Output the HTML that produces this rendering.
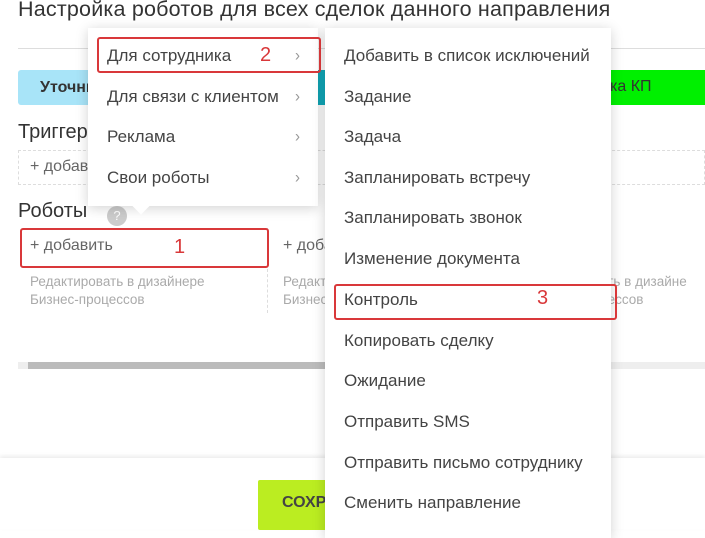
<!DOCTYPE html>
<html><head><meta charset="utf-8"><style>
*{margin:0;padding:0;box-sizing:border-box}
body{width:705px;height:529px;overflow:hidden;background:#fff;font-family:"Liberation Sans",sans-serif;position:relative;color:#333}
.a{position:absolute}
.title{left:18px;top:-3px;font-size:21.5px;color:#333;letter-spacing:0.2px}
.m{background:#fff;box-shadow:0 2px 12px rgba(0,0,0,.18)}
.it{position:absolute;font-size:17px;color:#444}
.ch{position:absolute;font-size:15px;color:#999;transform:scaleY(1.1)}
.gr{color:#aaa;font-size:13.5px}
.red{border:2px solid #d9383a;border-radius:3px}
.num{color:#d9383a;font-size:20px}
</style></head><body>
<div class="a title">Настройка роботов для всех сделок данного направления</div>
<div class="a" style="left:18px;top:48px;width:687px;height:1px;background:#ddd"></div>
<div class="a" style="left:18px;top:70px;width:300px;height:35px;background:#a8e4f8;border-radius:3px;font-weight:bold;font-size:16px;padding:9px 22px">Уточнить</div>
<div class="a" style="left:318px;top:70px;width:10px;height:35px;background:#1ab;"></div>
<div class="a" style="left:560px;top:70px;width:145px;height:35px;background:#00f000;font-size:16px;padding:8px 0 0 50px;color:#333">ка КП</div>
<div class="a" style="left:18px;top:121px;font-size:20px">Триггеры</div>
<div class="a" style="left:18px;top:150px;width:687px;height:35px;border:1px dashed #ddd"></div>
<div class="a" style="left:30px;top:158px;font-size:16px;color:#666">+ добавить</div>
<div class="a" style="left:590px;top:158px;font-size:16px;color:#666">ть</div>
<div class="a" style="left:18px;top:200px;font-size:20px">Роботы</div>
<div class="a" style="left:107px;top:206px;width:20px;height:20px;border-radius:50%;background:#ccc;color:#fff;font-size:13px;text-align:center;line-height:20px">?</div>
<div class="a" style="left:18px;top:228px;width:250px;height:85px;border-right:1px dashed #ddd"></div>
<div class="a" style="left:30px;top:237px;font-size:16px;color:#666">+ добавить</div>
<div class="a" style="left:283px;top:237px;font-size:16px;color:#666">+ добавить</div>
<div class="a" style="left:590px;top:237px;font-size:16px;color:#666">ть</div>
<div class="a gr" style="left:30px;top:273px;line-height:18px">Редактировать в дизайнере<br>Бизнес-процессов</div>
<div class="a gr" style="left:283px;top:273px;line-height:18px">Редактировать в дизайнере<br>Бизнес-процессов</div>
<div class="a gr" style="left:600px;top:273px;line-height:18px">ать в дизайне<br>цессов</div>
<div class="a red" style="left:20px;top:228px;width:249px;height:40px"></div>
<div class="a num" style="left:174px;top:236px">1</div>
<div class="a" style="left:18px;top:362px;width:687px;height:7px;background:#eee"></div>
<div class="a" style="left:28px;top:362px;width:300px;height:7px;background:#bbb"></div>
<div class="a" style="left:0;top:458px;width:705px;height:71px;background:#fff;box-shadow:0 -2px 4px rgba(0,0,0,.08)"></div>
<div class="a" style="left:258px;top:480px;width:80px;height:50px;background:#bbed21;border-radius:2px;font-weight:bold;font-size:16px;padding:14px 0 0 24px;color:#444">СОХРАНИТЬ</div>

<div class="a m" style="left:88px;top:28px;width:230px;height:178px">
<div class="it" style="left:19px;top:18px">Для сотрудника</div>
<div class="it" style="left:19px;top:59px">Для связи с клиентом</div>
<div class="it" style="left:19px;top:99px">Реклама</div>
<div class="it" style="left:19px;top:140px">Свои роботы</div>
<div class="ch" style="left:207px;top:19px">›</div>
<div class="ch" style="left:207px;top:60px">›</div>
<div class="ch" style="left:207px;top:100px">›</div>
<div class="ch" style="left:207px;top:141px">›</div>
</div>
<div class="a" style="left:135px;top:200px;width:12px;height:12px;background:#fff;transform:rotate(45deg)"></div>
<div class="a red" style="left:97px;top:37px;width:224px;height:36px"></div>
<div class="a num" style="left:260px;top:44px">2</div>

<div class="a m" style="left:325px;top:28px;width:286px;height:510px">
<div class="it" style="left:19px;top:18px">Добавить в список исключений</div>
<div class="it" style="left:19px;top:59px">Задание</div>
<div class="it" style="left:19px;top:99px">Задача</div>
<div class="it" style="left:19px;top:140px">Запланировать встречу</div>
<div class="it" style="left:19px;top:180px">Запланировать звонок</div>
<div class="it" style="left:19px;top:221px">Изменение документа</div>
<div class="it" style="left:19px;top:262px">Контроль</div>
<div class="it" style="left:19px;top:303px">Копировать сделку</div>
<div class="it" style="left:19px;top:343px">Ожидание</div>
<div class="it" style="left:19px;top:384px">Отправить SMS</div>
<div class="it" style="left:19px;top:425px">Отправить письмо сотруднику</div>
<div class="it" style="left:19px;top:465px">Сменить направление</div>
</div>
<div class="a red" style="left:334px;top:284px;width:283px;height:36px"></div>
<div class="a num" style="left:537px;top:287px">3</div>
</body></html>
